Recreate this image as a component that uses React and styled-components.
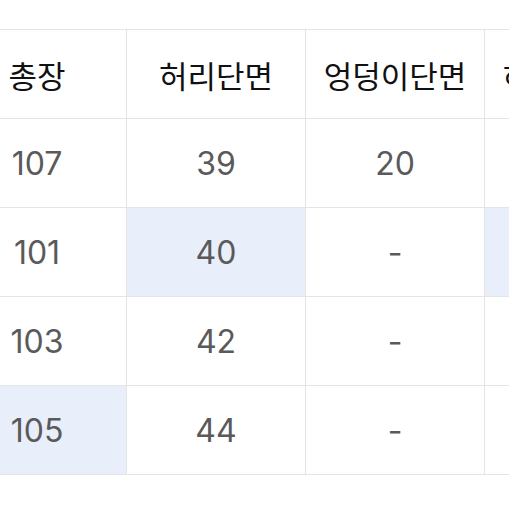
import React from 'react';
import styled, { createGlobalStyle } from 'styled-components';

const columns = ['총장', '허리단면', '엉덩이단면', '허벅지단면', '밑위'];

const rows = [
	{ id: 1, values: ['107', '39', '20', '', ''], marks: [] },
	{ id: 2, values: ['101', '40', '-', '', ''], marks: [1, 3] },
	{ id: 3, values: ['103', '42', '-', '', ''], marks: [] },
	{ id: 4, values: ['105', '44', '-', '', ''], marks: [0] },
];

function App() {
	return (
		<Page>
			<GlobalStyle />
			<ScrollArea>
				<Grid>
					{columns.map(c => (
						<HeadCell key={`head-${c}`}>{c}</HeadCell>
					))}
					{rows.map(r =>
						r.values.map((v, i) => (
							<Cell key={`row-${r.id}-${i}`} $marked={r.marks.includes(i)}>
								{v}
							</Cell>
						)),
					)}
				</Grid>
			</ScrollArea>
		</Page>
	);
}

export default App;

const GlobalStyle = createGlobalStyle`
	body {
		margin: 0;
		background: #fff;
		font-family: 'Noto Sans', 'Noto Sans CJK KR', sans-serif;
	}
`;

const Page = styled.div`
	width: 509px;
	height: 509px;
	overflow: hidden;
	background: #fff;
	padding-top: 29px;
	box-sizing: border-box;
`;

const ScrollArea = styled.div`
	margin-left: -52px;
	width: 900px;
`;

const Grid = styled.div`
	display: grid;
	grid-template-columns: repeat(5, 178px);
	grid-auto-rows: 88px;
	gap: 1px;
	padding: 1px 0;
	background: #e4e4e4;
	width: max-content;
`;

const HeadCell = styled.div`
	display: flex;
	align-items: center;
	justify-content: center;
	background: #fff;
	color: #111;
	font-family: 'Noto Sans CJK KR', sans-serif;
	font-size: 31px;
	font-weight: 400;
	white-space: nowrap;
`;

const Cell = styled.div`
	display: flex;
	align-items: center;
	justify-content: center;
	background: ${p => (p.$marked ? '#e9eefb' : '#fff')};
	color: #5a5a5a;
	font-family: Inter, sans-serif;
	font-size: 32px;
	font-weight: 400;
`;
